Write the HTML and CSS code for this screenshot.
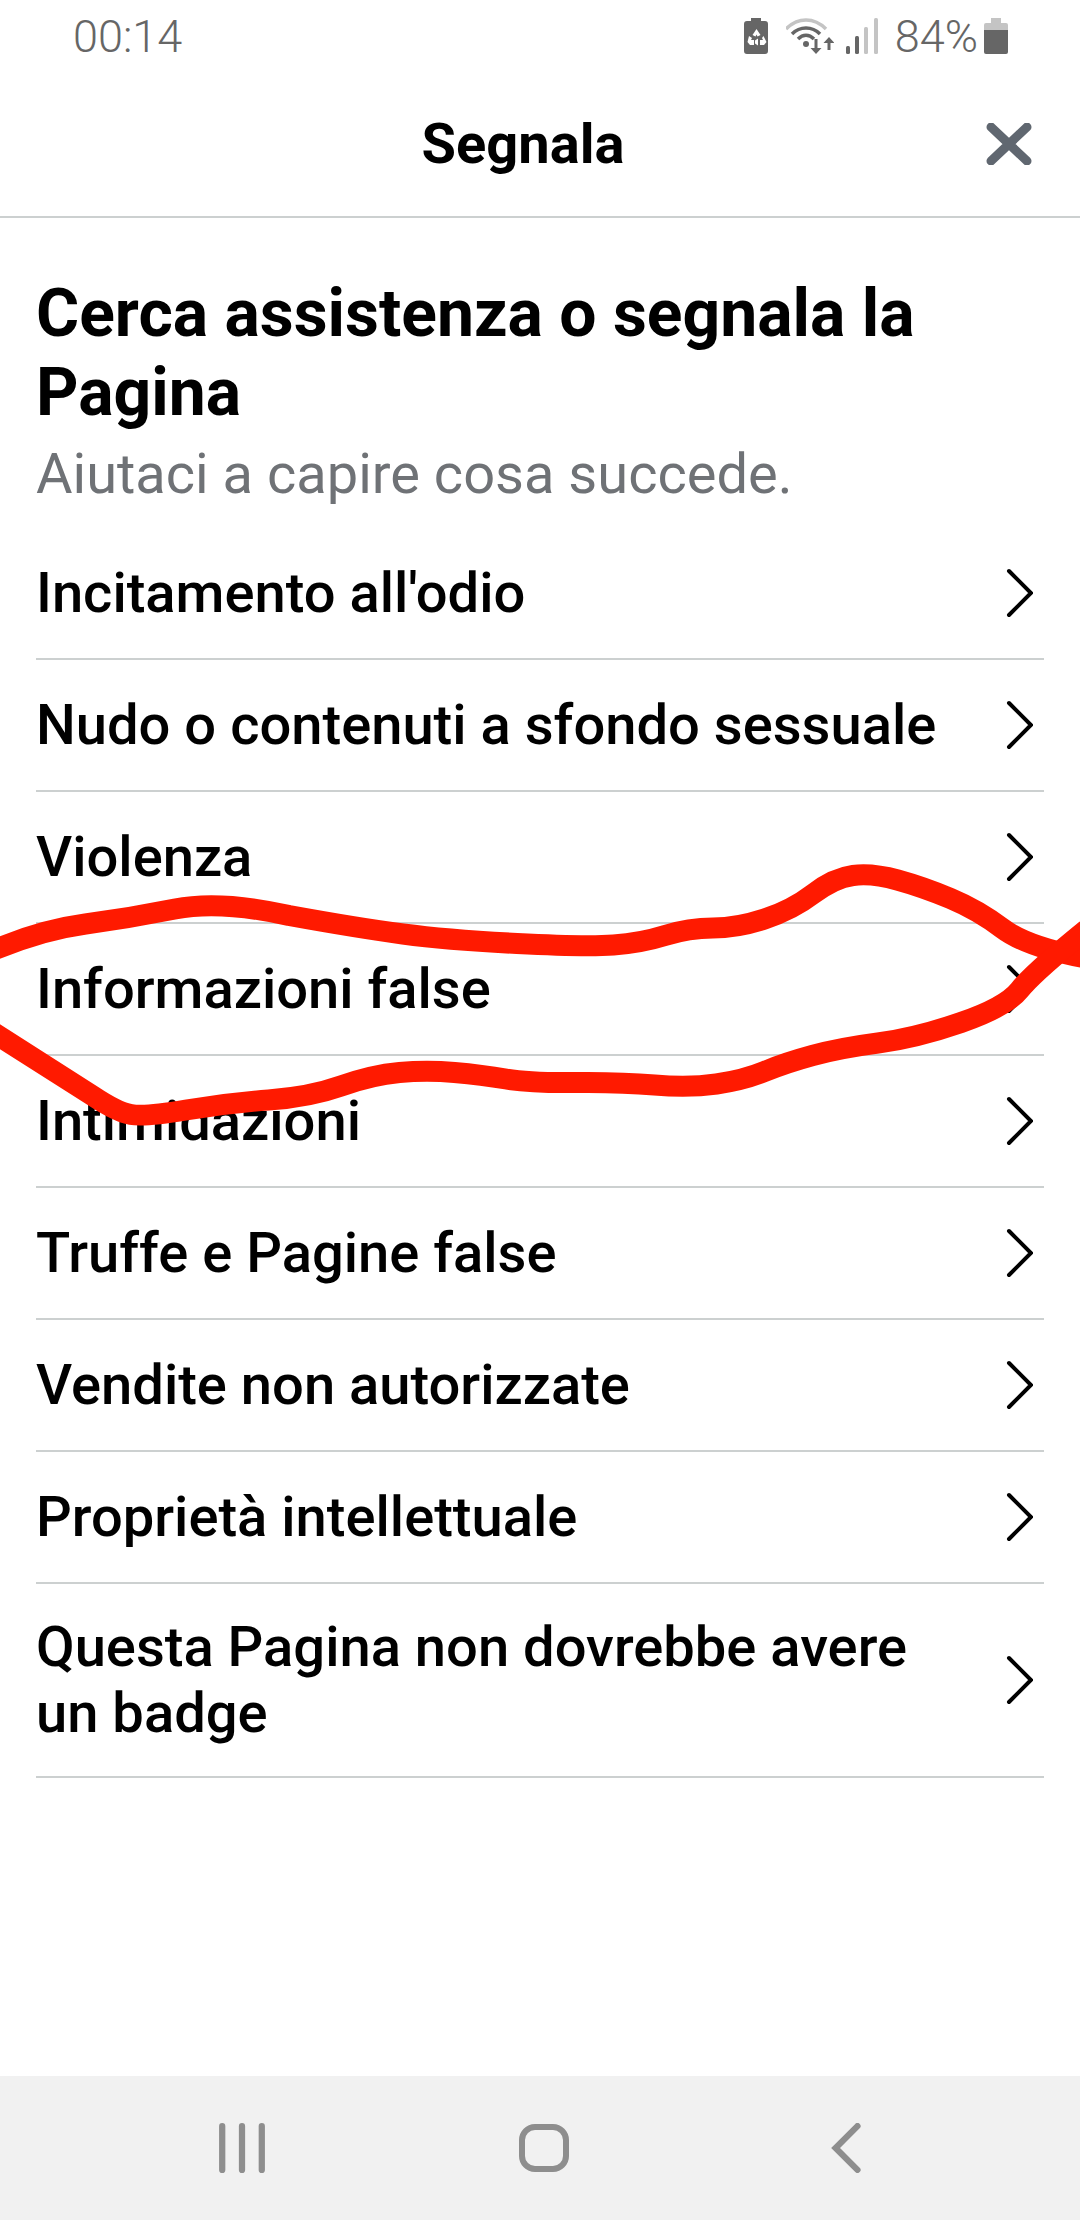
FILE: index.html

```html
<!DOCTYPE html>
<html lang="it">
<head>
  <meta charset="UTF-8">
  <meta name="viewport" content="width=device-width, initial-scale=1.0">
  <title>Segnala</title>
  <link rel="stylesheet" href="styles.css">
</head>
<body>
  <div class="phone">
    <div class="status-bar">
      <span class="status-time">00:14</span>
      <div class="status-icons">
        <svg class="icon-saver" viewBox="0 0 24 36">
          <path d="M7 0h10v3h4a3 3 0 0 1 3 3v27a3 3 0 0 1-3 3H3a3 3 0 0 1-3-3V6a3 3 0 0 1 3-3h4z" fill="#666"/>
          <path d="M12.500 11l4 6-3 1.500-1-2-1 2-3-1.500zM5 18l3 2-1 2h3v5H6l-2.500-3zM19.500 18l3 6-2.500 3h-4v-5h3l-1-2zM11 22.500l3-2v7l-3-2z" fill="#fff"/>
        </svg>
        <svg class="icon-wifi" viewBox="0 0 48 36">
          <path d="M0 11C12-1 28-1 40 11" fill="none" stroke="#c4c4c4" stroke-width="3.500"/>
          <path d="M6 16C14 8 26 8 34 16" fill="none" stroke="#666" stroke-width="3.500"/>
          <path d="M12 21C17 16 23 16 28 21" fill="none" stroke="#666" stroke-width="3.500"/>
          <circle cx="20" cy="26" r="3" fill="#666"/>
          <path d="M28.500 21h3v9h4l-5.500 6-5.500-6h4zM44.500 32h-3v-7h-4l5.500-6 5.500 6h-4z" fill="#666"/>
        </svg>
        <svg class="icon-signal" viewBox="0 0 32 36">
          <rect x="0" y="28" width="4" height="8" rx="1.500" fill="#666"/>
          <rect x="9" y="18" width="4" height="18" rx="1.500" fill="#666"/>
          <rect x="18" y="9" width="4" height="27" rx="1.500" fill="#c4c4c4"/>
          <rect x="28" y="0" width="4" height="36" rx="1.500" fill="#c4c4c4"/>
        </svg>
        <span class="status-pct">84%</span>
        <svg class="icon-battery" viewBox="0 0 24 36">
          <path d="M7 0h10v5H7z" fill="#c4c4c4"/>
          <path d="M2 5h20a2 2 0 0 1 2 2v5H0V7a2 2 0 0 1 2-2z" fill="#c4c4c4"/>
          <path d="M0 12h24v22a2 2 0 0 1-2 2H2a2 2 0 0 1-2-2z" fill="#666"/>
        </svg>
      </div>
    </div>

    <div class="top-bar">
      <span class="top-title">Segnala</span>
      <svg class="close-btn" viewBox="0 0 46 42">
        <path d="M5 4l36 34M41 4L5 38" fill="none" stroke="#606770" stroke-width="9" stroke-linecap="round"/>
      </svg>
    </div>

    <div class="intro">
      <h1>Cerca assistenza o segnala la Pagina</h1>
      <p>Aiutaci a capire cosa succede.</p>
    </div>

    <ul class="report-list">
      <li class="report-item"><span>Incitamento all'odio</span><svg class="chevron" viewBox="0 0 28 50"><path d="M4 3l22 22L4 47"/></svg></li>
      <li class="report-item"><span>Nudo o contenuti a sfondo sessuale</span><svg class="chevron" viewBox="0 0 28 50"><path d="M4 3l22 22L4 47"/></svg></li>
      <li class="report-item"><span>Violenza</span><svg class="chevron" viewBox="0 0 28 50"><path d="M4 3l22 22L4 47"/></svg></li>
      <li class="report-item"><span>Informazioni false</span><svg class="chevron" viewBox="0 0 28 50"><path d="M4 3l22 22L4 47"/></svg></li>
      <li class="report-item"><span>Intimidazioni</span><svg class="chevron" viewBox="0 0 28 50"><path d="M4 3l22 22L4 47"/></svg></li>
      <li class="report-item"><span>Truffe e Pagine false</span><svg class="chevron" viewBox="0 0 28 50"><path d="M4 3l22 22L4 47"/></svg></li>
      <li class="report-item"><span>Vendite non autorizzate</span><svg class="chevron" viewBox="0 0 28 50"><path d="M4 3l22 22L4 47"/></svg></li>
      <li class="report-item"><span>Proprietà intellettuale</span><svg class="chevron" viewBox="0 0 28 50"><path d="M4 3l22 22L4 47"/></svg></li>
      <li class="report-item tall"><span>Questa Pagina non dovrebbe avere un badge</span><svg class="chevron" viewBox="0 0 28 50"><path d="M4 3l22 22L4 47"/></svg></li>
    </ul>

    <div class="nav-bar">
      <div class="nav-slot">
        <svg class="nav-icon" viewBox="0 0 44 48"><path d="M3 3v42M22 3v42M41 3v42"/></svg>
      </div>
      <div class="nav-slot">
        <svg class="nav-icon" viewBox="0 0 50 50"><rect x="3" y="4" width="44" height="42" rx="13"/></svg>
      </div>
      <div class="nav-slot">
        <svg class="nav-icon" viewBox="0 0 30 48"><path d="M26 3L5 24l21 21"/></svg>
      </div>
    </div>

    <!-- red marker scribbled on top of the screenshot -->
    <svg class="scribble" viewBox="0 0 1080 2220">
      <path d="M-6 950 Q41 930 85.500 924 Q130 918 175 909 Q220 900 289 915.500 Q358 928 403 934 Q448 940 517 943.500 Q586 947 613.500 945 Q641 943 665 935.500 Q689 928 713 928 Q737 928 764.500 919 Q792 910 813 894 Q834 878 853 875.500 Q872 873 897.500 880 Q923 887 950.500 898.500 Q978 910 1002.500 928.500 Q1027 947 1086 958"/>
      <path d="M-6 1033 L93 1096 Q117 1112 131 1114.500 Q145 1117 186 1110 Q227 1103 268.500 1100 Q310 1097 341 1086 Q372 1075 399.500 1072.500 Q427 1070 454.500 1072.500 Q482 1075 506 1079 Q530 1083 575 1082.500 Q620 1082 654.500 1085 Q689 1088 716.500 1084 Q744 1080 764.500 1071.500 Q785 1063 812.500 1055.500 Q840 1048 878 1043 Q916 1038 961 1022.500 Q1006 1007 1019.500 990 Q1033 973 1086 930"/>
    </svg>
  </div>
</body>
</html>
```

FILE: styles.css

```css
* {
  box-sizing: border-box;
  margin: 0;
  padding: 0;
}

body {
  font-family: 'Roboto', sans-serif;
  background-color: #fff;
}

.phone {
  position: relative;
  width: 1080px;
  height: 2220px;
  overflow: hidden;
  display: flex;
  flex-direction: column;
  background-color: #fff;
  color: #000;
}

.status-bar {
  height: 72px;
  padding: 0 72px 0 73px;
  display: flex;
  justify-content: space-between;
  align-items: center;
  color: #666;
  font-size: 45px;
  font-weight: 300;
}

.status-icons {
  display: flex;
  align-items: center;
}

.icon-saver {
  width: 24px;
  height: 36px;
  margin-right: 18px;
}

.icon-wifi {
  width: 48px;
  height: 36px;
  margin-right: 12px;
}

.icon-signal {
  width: 32px;
  height: 36px;
  margin-right: 17px;
}

.icon-battery {
  width: 24px;
  height: 36px;
  margin-left: 6px;
}

.top-bar {
  position: relative;
  height: 146px;
  border-bottom: 2px solid #ccd0d0;
  display: flex;
  justify-content: center;
  align-items: center;
}

.top-title {
  font-size: 56px;
  font-weight: 700;
  margin-right: 34px;
}

.close-btn {
  position: absolute;
  right: 48px;
  top: 50%;
  width: 46px;
  height: 42px;
  margin-top: -21px;
}

.intro {
  padding: 56px 36px 12px;
}

.intro h1 {
  font-size: 66px;
  font-weight: 700;
  line-height: 79px;
}

.intro p {
  font-size: 56px;
  line-height: 84px;
  color: #6f7276;
}

.report-list {
  list-style: none;
  padding: 0 36px;
  flex: 1;
}

.report-item {
  height: 132px;
  display: flex;
  align-items: center;
  justify-content: space-between;
  border-bottom: 2px solid #ccd0d0;
  font-size: 56.100px;
  font-weight: 500;
  line-height: 66px;
}

.report-item.tall {
  height: 194px;
}

.report-item span {
  max-width: 930px;
}

.chevron {
  width: 28px;
  height: 50px;
  flex-shrink: 0;
  margin-right: 11px;
}

.chevron path {
  fill: none;
  stroke: #000;
  stroke-width: 4;
  stroke-linecap: round;
}

.nav-bar {
  height: 144px;
  padding-left: 8px;
  background-color: #f1f1f1;
  display: flex;
  justify-content: center;
  align-items: center;
}

.nav-slot {
  width: 302px;
  display: flex;
  justify-content: center;
}

.nav-icon {
  height: 50px;
  width: 50px;
}

.nav-icon path,
.nav-icon rect {
  fill: none;
  stroke: #8e8e8e;
  stroke-width: 6;
  stroke-linecap: round;
}

.scribble {
  position: absolute;
  left: 0;
  top: 0;
  width: 1080px;
  height: 2220px;
  pointer-events: none;
}

.scribble path {
  fill: none;
  stroke: #ff1a00;
  stroke-width: 21;
  stroke-linecap: round;
  stroke-linejoin: round;
}
```
